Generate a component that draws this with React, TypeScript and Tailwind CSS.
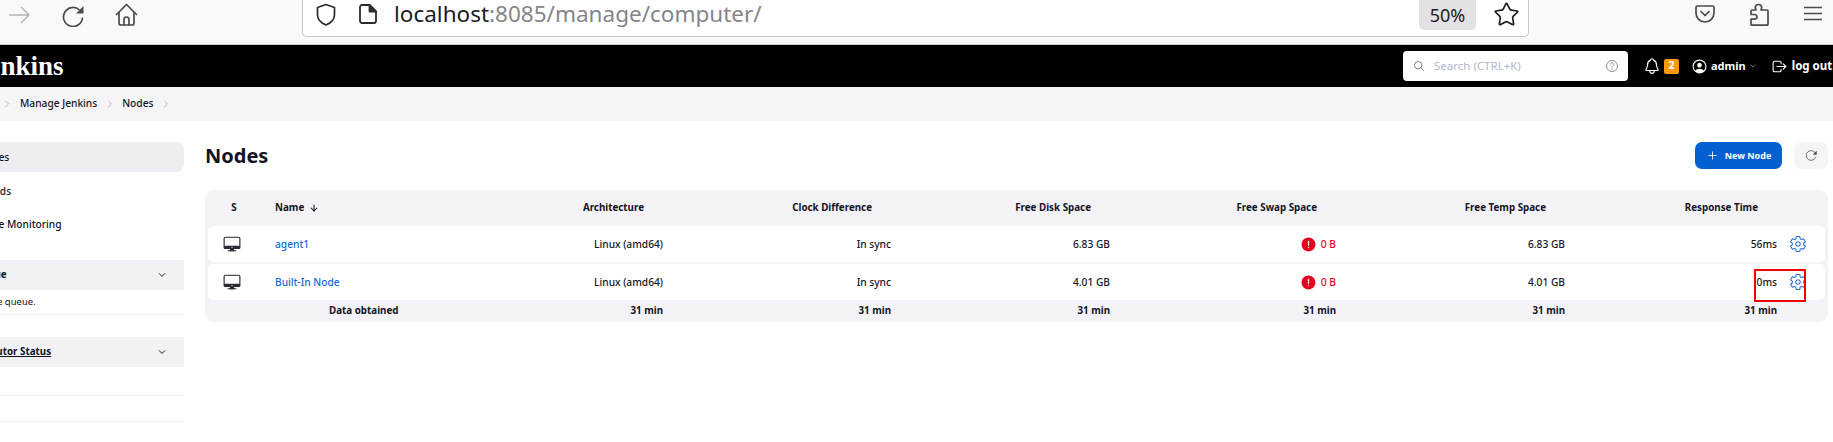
import React from "react";
import { ArrowDown, ChevronRight, Star } from "lucide-react";
import {
  IoAddOutline,
  IoAlertCircle,
  IoChevronDownOutline,
  IoDesktopOutline,
  IoHelpCircleOutline,
  IoLogOutOutline,
  IoNotificationsOutline,
  IoPersonCircleOutline,
  IoReloadOutline,
  IoSearchOutline,
  IoSettingsOutline,
} from "react-icons/io5";

const gridCols =
  "grid grid-cols-[52px_200px_203px_228px_219px_226px_229px_212px_48px] items-center";

const Toolbar = () => (
  <div className="flex h-[45px] items-start border-b border-[#cfcfd4] bg-[#f9f9fb] text-[#4a4a4f]">
    <svg className="ml-[8px] mt-[6px] text-[#b5b5b8]" width="22" height="18" viewBox="0 0 22 18" fill="none" stroke="currentColor" strokeWidth="1.5">
      <path d="M1 9h20M13 1l8 8-8 8" />
    </svg>
    <svg className="ml-[32px] mt-[5px]" width="22" height="22" viewBox="0 0 22 22" fill="none" stroke="currentColor" strokeWidth="1.7">
      <path d="M17.500 5A9.500 9.500 0 1 0 20.500 12.500" />
      <path d="M21.500 1v7.500H14z" fill="currentColor" stroke="none" />
    </svg>
    <svg className="ml-[31px] mt-[3px]" width="23" height="23" viewBox="0 0 23 23" fill="none" stroke="currentColor" strokeWidth="1.7" strokeLinecap="round" strokeLinejoin="round">
      <path d="M1.500 11.500L11.500 1.500l10 10" />
      <path d="M4 9.500V20a2 2 0 0 0 2 2h11a2 2 0 0 0 2-2V9.500" />
      <path d="M9 22v-5.500a2.500 2.500 0 0 1 5 0V22" />
    </svg>
    <div className="ml-[164px] flex h-[37px] w-[1227px] items-start rounded-b-[5px] border border-t-0 border-[#c6c6ca] bg-white">
      <svg className="ml-[13px] mt-[3px] text-[#2b2b30]" width="20" height="23" viewBox="0 0 20 23" fill="none" stroke="currentColor" strokeWidth="1.7" strokeLinejoin="round">
        <path d="M10 1.500L18.500 4.500V11.500c0 5-3.500 8.500-8.500 10.500C5 20 1.500 16.500 1.500 11.500V4.500z" />
      </svg>
      <svg className="ml-[23px] mt-[4px] text-[#2b2b30]" width="18" height="20" viewBox="0 0 18 20" fill="none" stroke="currentColor" strokeWidth="1.8" strokeLinejoin="round">
        <path d="M3 1h7.500L17 7.500V17a2 2 0 0 1-2 2H3a2 2 0 0 1-2-2V3a2 2 0 0 1 2-2z" />
        <path d="M10.500 1L17 7.500h-6.500z" fill="currentColor" />
      </svg>
      <div className="ml-[17px] text-[22.5px] leading-[28px] text-[#85858a]">
        <span className="text-[#1c1b22]">localhost</span>:8085/manage/computer/
      </div>
      <div className="ml-auto flex h-[30px] w-[57px] items-center justify-center rounded-b-[5px] bg-[#e2e2e4] text-[18px] text-[#1c1b22]">
        50%
      </div>
      <Star className="ml-[17px] mr-[8px] mt-[1px] text-[#1c1b22]" size={27} strokeWidth={1.5} />
    </div>
    <svg className="ml-[166px] mt-[5px]" width="20" height="18" viewBox="0 0 20 18" fill="none" stroke="currentColor" strokeWidth="1.700">
      <path d="M2.500 1h15A1.500 1.500 0 0 1 19 2.500V8A9 9 0 0 1 1 8V2.500A1.500 1.500 0 0 1 2.500 1z" />
      <path d="M6 6.500l4 4 4-4" strokeLinecap="round" strokeLinejoin="round" />
    </svg>
    <svg className="ml-[35px] mt-[3px]" width="19" height="23" viewBox="0 0 19 23" fill="none" stroke="currentColor" strokeWidth="1.700" strokeLinejoin="round">
      <path d="M8.500 1.500c-2 0-3.200 1.500-3.200 3 0 1 .5 1.500.7 2.500H2c-.6 0-1 .4-1 1v3.500h3c2 0 3 1 3 2.300s-1 2.400-3 2.400H1v5c0 .6.4 1 1 1h15c.6 0 1-.4 1-1V8c0-.6-.4-1-1-1h-6c.2-1 .7-1.500.7-2.500 0-1.500-1.200-3-3.200-3z" />
    </svg>
    <svg className="ml-[35px] mt-[6px]" width="18" height="15" viewBox="0 0 18 15" stroke="currentColor" strokeWidth="1.700">
      <path d="M0 1.500h18M0 7.500h18M0 13.500h18" />
    </svg>
  </div>
);

const Header = () => (
  <div className="flex h-[42px] items-center overflow-hidden bg-black text-white">
    <div className="w-[1403px] flex-none">
      <div className="ml-[-25px] font-['Liberation_Serif',serif] text-[27px] font-bold leading-none">
        Jenkins
      </div>
    </div>
    <div className="flex h-[30px] w-[225px] flex-none items-center rounded-[4px] bg-white pl-[10px] text-[11.5px] text-[#b4b8cc]">
      <IoSearchOutline size={12} className="text-[#55555f]" />
      <span className="ml-[9px]">Search (CTRL+K)</span>
      <IoHelpCircleOutline size={16} className="ml-auto mr-[8px] text-[#8c8ca0]" />
    </div>
    <IoNotificationsOutline size={18} className="ml-[15px] flex-none" />
    <div className="ml-[3px] flex h-[15px] w-[15px] flex-none items-center justify-center rounded-[2px] bg-[#fe9a0a] text-[10.5px] font-bold">
      2
    </div>
    <IoPersonCircleOutline size={17} className="ml-[12px] flex-none" />
    <span className="ml-[3px] text-[11px] font-bold">admin</span>
    <IoChevronDownOutline size={8} className="ml-[3px] flex-none text-[#a0a0a0]" />
    <IoLogOutOutline size={17} className="ml-[14px] flex-none" />
    <span className="ml-[4px] flex-none whitespace-nowrap text-[11.5px] font-bold">log out</span>
  </div>
);

const Breadcrumbs = () => (
  <div className="flex h-[34px] items-center bg-[#f5f5f8] text-[10.2px] font-medium text-[#14141f]">
    <ChevronRight size={12} strokeWidth={1.5} className="ml-[1px] text-[#a8a8b0]" />
    <span className="ml-[7px]">Manage Jenkins</span>
    <ChevronRight size={12} strokeWidth={1.5} className="ml-[7px] text-[#a8a8b0]" />
    <span className="ml-[6px]">Nodes</span>
    <ChevronRight size={12} strokeWidth={1.5} className="ml-[7px] text-[#a8a8b0]" />
  </div>
);

const Sidebar = () => (
  <div className="ml-[-80px] mt-[21px] flex w-[264px] flex-none flex-col text-[10.2px] font-medium text-[#14141f]">
    <div className="flex h-[30px] items-center rounded-[8px] bg-[#ededf2] pl-[58px] pt-[1px]">Nodes</div>
    <div className="mt-[4px] flex h-[30px] items-center pl-[58px] pt-[1px]">Clouds</div>
    <div className="mt-[3px] flex h-[30px] items-center pl-[58px] pt-[1px]">Node Monitoring</div>
    <div className="mt-[21px] flex h-[30px] items-center justify-between bg-[#f2f2f6] pl-[27px] pr-[17px] text-[9.8px] font-bold">
      Build Queue
      <IoChevronDownOutline size={10} />
    </div>
    <div className="flex h-[25px] items-center border-b border-[#efeff2] pl-[12px] text-[9.5px] font-normal">
      No builds in the queue.
    </div>
    <div className="mt-[22px] flex h-[30px] items-center justify-between bg-[#f2f2f6] pl-[27px] pr-[17px] text-[9.8px] font-bold">
      <span className="underline">Build Executor Status</span>
      <IoChevronDownOutline size={10} />
    </div>
    <div className="h-[29px] border-b border-[#efeff2]" />
    <div className="h-[26px] border-b border-[#efeff2]" />
  </div>
);

const rows = [
  { name: "agent1", disk: "6.83 GB", temp: "6.83 GB", time: "56ms" },
  { name: "Built-In Node", disk: "4.01 GB", temp: "4.01 GB", time: "0ms" },
];

const headers = ["Architecture", "Clock Difference", "Free Disk Space", "Free Swap Space", "Free Temp Space", "Response Time"];

const NodesTable = () => (
  <div className="mt-[21px] rounded-[9px] bg-[#f2f2f7] px-[3px] text-[10.2px] font-medium text-[#14141f]">
    <div className={`${gridCols} h-[36px] text-[9.8px] font-bold`}>
      <div className="text-center">S</div>
      <div className="flex items-center pl-[15px]">
        Name <ArrowDown size={10} strokeWidth={2.5} className="ml-[5px]" />
      </div>
      {headers.map((h) => (
        <div key={h} className="pr-[19px] text-right">
          {h}
        </div>
      ))}
    </div>
    <div className="flex flex-col gap-[2px]">
      {rows.map((r, i) => (
        <div key={r.name} className={`${gridCols} relative h-[36px] rounded-[5px] bg-white`}>
          <div className="flex justify-center pr-[4px]">
            <IoDesktopOutline size={18} className="text-[#2a2a33]" />
          </div>
          <div className="pl-[15px] pt-[1px] text-[#0f6ae0]">{r.name}</div>
          <div className="pt-[1px] text-right">Linux (amd64)</div>
          <div className="pt-[1px] text-right">In sync</div>
          <div className="pt-[1px] text-right">{r.disk}</div>
          <div className="flex items-center justify-end text-[#e6001f]">
            <IoAlertCircle size={17} className="mr-[4px]" />
            <span className="pt-[1px]">0 B</span>
          </div>
          <div className="pt-[1px] text-right">{r.temp}</div>
          <div className="pt-[1px] text-right">{r.time}</div>
          <div className="flex justify-start pl-[12px]">
            <IoSettingsOutline size={18} className="text-[#2b6fd6]" />
          </div>
          {i === 1 && (
            <div className="absolute left-[1546px] top-[5px] h-[33px] w-[52px] border-2 border-[#f00000]" />
          )}
        </div>
      ))}
    </div>
    <div className={`${gridCols} h-[22px] text-[9.8px] font-bold`}>
      <div />
      <div className="whitespace-nowrap pl-[69px]">Data obtained</div>
      {headers.map((h) => (
        <div key={h} className="text-right">
          31 min
        </div>
      ))}
      <div />
    </div>
  </div>
);

export default function App() {
  return (
    <div className="h-[442px] w-[1833px] overflow-hidden bg-white font-['Noto_Sans',sans-serif]">
      <Toolbar />
      <Header />
      <Breadcrumbs />
      <div className="flex">
        <Sidebar />
        <div className="ml-[21px] mr-[5px] flex-1 pt-[21px]">
          <div className="flex h-[27px] items-center justify-between">
            <h1 className="text-[20px] font-bold text-[#14141f]">Nodes</h1>
            <div className="flex gap-[12px]">
              <div className="flex h-[27px] w-[87px] items-center justify-center rounded-[7px] bg-[#0260d0] text-[9px] font-bold text-white">
                <IoAddOutline size={13} className="mr-[6px]" />
                New Node
              </div>
              <div className="flex h-[27px] w-[34px] items-center justify-center rounded-[7px] bg-[#f5f5f8] text-[#555]">
                <IoReloadOutline size={13} />
              </div>
            </div>
          </div>
          <NodesTable />
        </div>
      </div>
    </div>
  );
}
